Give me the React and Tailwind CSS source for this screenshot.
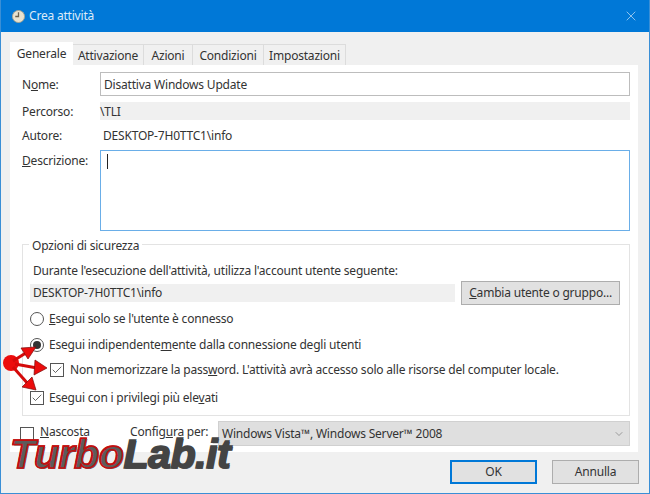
import { Check, ChevronDown, X } from 'lucide-react'

const tabs = [
  ['Attivazione', 'w-[71px]'],
  ['Azioni', 'w-[49px]'],
  ['Condizioni', 'w-[71px]'],
  ['Impostazioni', 'w-[82px]'],
]

function Radio({ checked }) {
  return (
    <span className="flex h-[14px] w-[14px] shrink-0 items-center justify-center rounded-full border border-[#555] bg-white">
      {checked && <span className="h-2 w-2 rounded-full bg-[#333]" />}
    </span>
  )
}

function Tick({ checked }) {
  return (
    <span className="flex h-[14px] w-[14px] shrink-0 items-center justify-center border border-[#555] bg-white">
      {checked && <Check size={12} strokeWidth={1.5} className="text-[#333]" />}
    </span>
  )
}

function ClockIcon() {
  return (
    <svg width="13" height="13" viewBox="0 0 14 14">
      <circle cx="7" cy="7" r="6.5" fill="#e8e2cf" stroke="#a9a48f" />
      <path d="M7 2.5V7H3.5" fill="none" stroke="#6b6350" strokeWidth="1.4" />
    </svg>
  )
}

function Arrows() {
  return (
    <svg width="50" height="70" viewBox="0 0 50 70" className="absolute left-0 top-[341px]">
      <circle cx="10" cy="22" r="8" fill="#ec0c0c" />
      <g stroke="#d40a0a" strokeWidth="3" fill="none">
        <path d="M12 20L28 10" />
        <path d="M14 23L36 27" />
        <path d="M12 26L28 44" />
      </g>
      <g fill="#ec0c0c" stroke="#7a0c0c" strokeWidth="0.7">
        <path d="M35 6L27 18L20 7Z" />
        <path d="M46 27L33 34L34 19Z" />
        <path d="M35 49L21 46L31 36Z" />
      </g>
    </svg>
  )
}

function Watermark() {
  return (
    <div className="pointer-events-none absolute left-[9px] top-[438px] flex text-[41px] font-bold italic leading-[32px] tracking-[-0.4px] font-['Liberation_Sans',sans-serif] [text-shadow:1px_1px_0_#5c5c5c]">
      <span className="bg-[repeating-linear-gradient(180deg,#d80e0e_0px,#d80e0e_5px,#8a1414_5px,#8a1414_6px)] bg-clip-text text-transparent [-webkit-text-stroke:1.5px_#c01010]">Turbo</span>
      <span className="text-[#444] [-webkit-text-stroke:1.5px_#444]">Lab.it</span>
    </div>
  )
}

export default function App() {
  return (
    <div className="relative flex h-[494px] w-[650px] flex-col overflow-hidden border border-t-0 border-[#3a8fd6] bg-[#f0f0f0] text-[12px] tracking-[-0.2px] text-[#333] font-['Noto_Sans',sans-serif]">
      {/* Title bar */}
      <div className="-mx-px flex h-[32px] shrink-0 items-center bg-[#0078d7] pl-[12px] pr-[11px] text-white">
        <ClockIcon />
        <span className="ml-[4px] text-[#dcebf8]">Crea attività</span>
        <X size={16} strokeWidth={1} className="ml-auto text-[#d6e8f7]" />
      </div>

      {/* Tabs */}
      <div className="ml-[9px] mt-[10px] flex h-[23px] items-end">
        <div className="flex h-[23px] w-[63px] items-center justify-center bg-white pt-[1px]">Generale</div>
        {tabs.map(([tab, width]) => (
          <div key={tab} className={`flex h-[21px] items-center justify-center border-r border-t border-[#dcdcdc] bg-[#f0f0f0] pt-[2px] ${width}`}>{tab}</div>
        ))}
      </div>

      {/* Panel */}
      <div className="ml-[9px] flex h-[387px] w-[628px] flex-col bg-white pl-[12px] pr-[8px] pt-[7px]">
        <div className="flex h-[24px] items-center">
          <span className="w-[78px] pt-[1px]">N<u>o</u>me:</span>
          <div className="flex h-[24px] flex-1 items-center border border-[#bdbdbd] px-[3px] pt-[1px]">Disattiva Windows Update</div>
        </div>
        <div className="mt-[6px] flex h-[18px] items-center">
          <span className="w-[78px] pt-[1px]">Percorso:</span>
          <div className="flex h-[18px] flex-1 items-center bg-[#f0f0f0] pt-[1px]">\TLI</div>
        </div>
        <div className="mt-[6px] flex h-[18px] items-center">
          <span className="w-[78px] pt-[1px]">Autore:</span>
          <span className="pl-[3px] pt-[1px]">DESKTOP-7H0TTC1\info</span>
        </div>
        <div className="mt-[6px] flex h-[81px]">
          <span className="mt-[2px] w-[78px]"><u>D</u>escrizione:</span>
          <div className="flex-1 border border-[#6aaee8] pl-[6px] pt-[3px]">
            <div className="h-[15px] w-px bg-[#222]" />
          </div>
        </div>

        {/* Security options */}
        <div className="relative mt-[13px] flex h-[172px] flex-col border border-[#e3e3e3] pl-[7px] pr-[9px]">
          <span className="absolute -top-[8px] left-[6px] bg-white px-[3px] leading-[17px]">Opzioni di sicurezza</span>
          <p className="ml-[3px] mt-[17px] leading-[17px]">Durante l'esecuzione dell'attività, utilizza l'account utente seguente:</p>
          <div className="mt-[2px] flex items-center">
            <div className="flex h-[18px] w-[426px] items-center bg-[#f0f0f0] pl-[3px]">DESKTOP-7H0TTC1\info</div>
            <button className="ml-[6px] h-[24px] w-[159px] border border-[#adadad] bg-[#e1e1e1] text-center text-[#333]"><u>C</u>ambia utente o gruppo...</button>
          </div>
          <div className="mt-[5px] flex h-[17px] items-center gap-[5px]"><Radio /><span><u>E</u>segui solo se l'utente è connesso</span></div>
          <div className="mt-[9px] flex h-[17px] items-center gap-[5px]"><Radio checked /><span>Esegui indipendente<u>m</u>ente dalla connessione degli utenti</span></div>
          <div className="ml-[20px] mt-[8px] flex h-[17px] items-center gap-[6px]"><Tick checked /><span>Non memorizzare la pass<u>w</u>ord. L'attività avrà accesso solo alle risorse del computer locale.</span></div>
          <div className="mt-[11px] flex h-[17px] items-center gap-[5px]"><Tick checked /><span>Esegui con i privilegi più ele<u>v</u>ati</span></div>
        </div>

        {/* Hidden + configure */}
        <div className="-ml-[2px] mt-[5px] flex h-[25px] items-center">
          <Tick />
          <span className="ml-[6px] w-[90px] -mt-[3px]"><u>N</u>ascosta</span>
          <span className="w-[88px] -mt-[3px]">Config<u>u</u>ra per:</span>
          <div className="flex h-[25px] flex-1 items-center border border-[#d0d0d0] bg-[#dfdfdf] pl-[3px] pr-[4px] pt-[1px]">
            Windows Vista™, Windows Server™ 2008
            <ChevronDown size={12} strokeWidth={1} className="ml-auto text-[#555]" />
          </div>
        </div>
      </div>

      {/* Buttons */}
      <div className="mt-[8px] flex justify-end gap-[15px] pr-[10px]">
        <button className="h-[24px] w-[87px] border-2 border-[#0078d7] bg-[#e1e1e1] text-[#333]">OK</button>
        <button className="h-[24px] w-[87px] border border-[#adadad] bg-[#e1e1e1] text-[#333]">Annulla</button>
      </div>

      <Arrows />
      <Watermark />
    </div>
  )
}
